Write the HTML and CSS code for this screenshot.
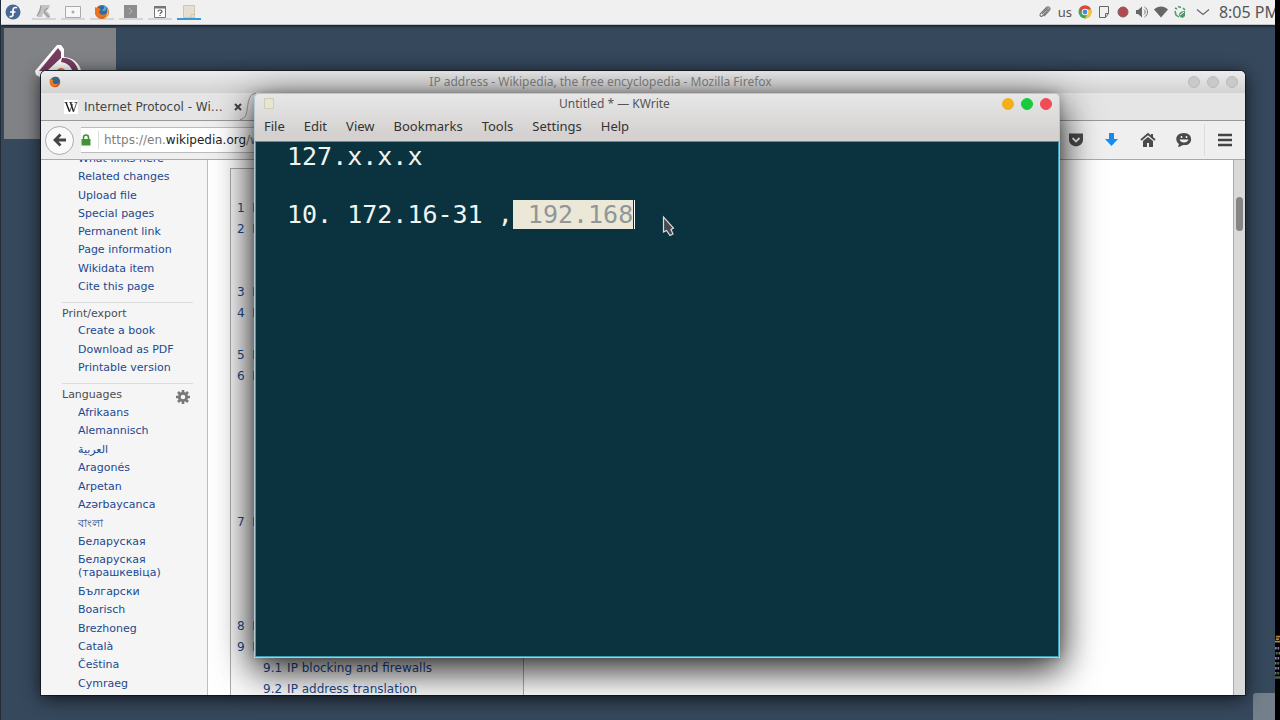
FILE: index.html
```html
<!DOCTYPE html>
<html lang="en">
<head>
<meta charset="utf-8">
<title>Desktop</title>
<link rel="stylesheet" href="styles.css">
</head>
<body>
<div class="screen">
<div class="desktop">
  <header class="panel">
    <nav class="launchers" aria-label="Launchers">
      <button class="launcher plain" aria-label="Applications"><svg width="16" height="16" viewBox="0 0 16 16"><circle cx="8" cy="8" r="7.500" fill="#4a6896"/><path d="M4.500 12.500C7 13 8 12 8 10V6.500C8 4 9.500 3 12 3.700M5 8h5.500" fill="none" stroke="#fff" stroke-width="1.700"/></svg></button>
      <button class="launcher" aria-label="Tools"><svg width="16" height="16" viewBox="0 0 16 16"><path d="M4 1h10l-1 3-3 2 4 5v3h-3l-4-5-1 4H1l2-3-2-1 3-2z" fill="#c3c3c3"/><path d="M5 2c-1 4-1 7-4 10M8 7l4-3M8 8l5 5" fill="none" stroke="#9d9d9d" stroke-width="1.500"/></svg></button>
      <button class="launcher" aria-label="Screen"><svg width="16" height="16" viewBox="0 0 16 16"><path d="M.5 2.500h15v11H.5z" fill="#f7f7f7" stroke="#aaa"/><circle cx="8" cy="8" r="1.500" fill="#aaa"/></svg></button>
      <button class="launcher" aria-label="Firefox"><svg width="16" height="16" viewBox="0 0 16 16"><circle cx="8" cy="8" r="7" fill="#d95d1c"/><circle cx="8.500" cy="6.500" r="5" fill="#2f6ca6"/><path d="M9 1.500c2 1 2 3 0 4s1 2 2 1 2-3 1-4z" fill="#58b9d0"/><path d="M1 3c1 1 2 1 4 1l2 2-2 1c0 4 5 5 8 2-1 5-11 7-12 0z" fill="#e87322"/><path d="M13 4c3 4 1 10-4 11 3-2 5-5 4-11z" fill="#f8bf3a"/></svg></button>
      <button class="launcher" aria-label="Terminal"><svg width="16" height="16" viewBox="0 0 16 16"><path d="M1 1h13v13H1z" fill="#8d8d8d"/><path d="m6 4 3 3.500L6 10" fill="none" stroke="#bbb"/></svg></button>
      <button class="launcher" aria-label="Help window"><svg width="16" height="16" viewBox="0 0 16 16"><path d="M2.500 2.500h11v11h-11z" fill="#fff" stroke="#777"/><path d="M2 2h12v2.500H2z" fill="#6d7780"/><path d="M6 7.500c0-2 4-2 4 0 0 1.300-2 1.200-2 2.500m0 1v1" fill="none" stroke="#555" stroke-width="1.200"/></svg></button>
      <button class="launcher active" aria-label="KWrite"><svg width="16" height="16" viewBox="0 0 16 16"><path d="M2.500 1.500h11v12h-11z" fill="#e6dfcf" stroke="#cdc6b5"/><path d="M10 13.500v-3h3.500" fill="none" stroke="#cdc6b5"/></svg></button>
    </nav>
    <div class="tray">
      <svg width="14" height="14" viewBox="0 0 14 14"><path d="M4 9l5-5c1-1 2 0 1 1L5 10.500c-2 2-4 0-2.500-2L8 3c2.500-2.500 5.500 0 3 3l-5 5" fill="none" stroke="#777" stroke-width="1.100"/></svg>
      <span class="layout">us</span>
      <svg width="14" height="14" viewBox="0 0 14 14"><circle cx="7" cy="7" r="6.500" fill="#3fa757"/><path d="M1.400 3.800A6.500 6.500 0 0 1 13 4.500H7L4 8z" fill="#d94a3e"/><path d="M13 4.500A6.500 6.500 0 0 1 7 13.500L10 8 8 4.500z" fill="#f3c63a"/><circle cx="7" cy="7" r="3.200" fill="#fff"/><circle cx="7" cy="7" r="2.400" fill="#4b87dc"/></svg>
      <svg width="14" height="14" viewBox="0 0 14 14"><path d="M2.500 1.500h9v7l-3 4h-6zM11.500 8.500h-3v4" fill="none" stroke="#666"/></svg>
      <svg width="14" height="14" viewBox="0 0 14 14"><circle cx="7" cy="7" r="5" fill="#b3484e" stroke="#7b6264"/></svg>
      <svg width="14" height="14" viewBox="0 0 14 14"><path d="M1 5h2l4-3.500v11L3 9H1z" fill="#666"/><path d="M9 4.500c1.500 1 1.500 4 0 5M9.500 2c4 2 4 8 0 10" fill="none" stroke="#777"/></svg>
      <svg width="14" height="14" viewBox="0 0 14 14"><path d="M0 4.500c4-4 10-4 14 0l-7 8z" fill="#666"/></svg>
      <svg width="14" height="14" viewBox="0 0 14 14"><path d="M2 3l2 1M5 1.500l3 1M10 3l2 2M2 6l1 4 3 2" fill="none" stroke="#4c9b6b" stroke-width="1.500"/><path d="M6 10c0-3 3-4 6-4v5c-2 3-5 2-6-1z" fill="#4c9b6b"/><path d="m7 10 4-3" stroke="#fff"/></svg>
      <svg class="chevron" width="14" height="14" viewBox="0 0 14 14"><path d="m1 4.500 6 5 6-5" fill="none" stroke="#666" stroke-width="1.200"/></svg>
      <time class="clock">8:05 PM</time>
    </div>
  </header>

  <div class="folder"><svg width="60" height="60" viewBox="0 0 60 60"><path d="M3 27 25 1h4l3 4v8c12 1 18 9 18 21H10l-6-3z" fill="#fff"/><path d="M7 27 26 4l3 4v6L15 27z" fill="#793d60"/><path d="M30 14c10-1 16 7 17 16h-6c-1-7-5-11-12-12z" fill="#793d60"/><circle cx="29" cy="29" r="5" fill="#e77b36"/></svg></div>
  <div class="corner"></div>

  <section class="window firefox">
    <div class="titlebar">
      <svg width="12" height="12" viewBox="0 0 16 16"><circle cx="8" cy="8" r="7" fill="#c94e22"/><circle cx="9" cy="6" r="5" fill="#31668f"/><path d="M1 4c2 0 3 0 5 2l-1 2c1 3 5 4 8 1-2 6-11 7-12 0z" fill="#e87925"/></svg>
      <h1 class="title">IP address - Wikipedia, the free encyclopedia - Mozilla Firefox</h1>
      <div class="controls"><button aria-label="Minimize Firefox"></button><button aria-label="Maximize Firefox"></button><button aria-label="Close Firefox"></button></div>
    </div>
    <div class="tabs">
      <div class="tab">
        <svg width="14" height="14" viewBox="0 0 14 14"><path d="M0 0h14v14H0z" fill="#fff"/><path d="M.5 2.500h3M5.500 2.500h3M10.500 2.500h3M5.500 12 8.500 4M9.500 12 12.500 3" fill="none" stroke="#333" stroke-width=".8"/><path d="m2 2.500 3.500 9M6.500 2.500l3 9" stroke="#222" stroke-width="1.500"/></svg>
        <span>Internet Protocol - Wi…</span>
        <button aria-label="Close tab"><svg width="8" height="8" viewBox="0 0 8 8"><path d="m1 1 6 6M7 1 1 7" stroke="#444" stroke-width="2"/></svg></button>
      </div>
      <svg class="tab-edge" width="16" height="27" viewBox="0 0 16 27"><path d="M0 26.500C12 26 3 1 16 .5" fill="none" stroke="#999"/></svg>
    </div>
    <div class="toolbar">
      <button class="back" aria-label="Back"><svg width="14" height="14" viewBox="0 0 14 14"><path d="M13 7H2M7.500 1.500 2 7l5.500 5.500" fill="none" stroke="#444" stroke-width="2.800"/></svg></button>
      <div class="address">
        <svg width="10" height="12" viewBox="0 0 10 12"><path d="M2.500 6V3.500a2.500 2.500 0 0 1 5 0V6" fill="none" stroke="#419334" stroke-width="1.600"/><path d="M.5 5h9v6.500h-9z" fill="#419334"/></svg>
        <div class="url">https://en.<b>wikipedia.org</b>/w</div>
      </div>
      <button aria-label="Pocket"><svg width="16" height="16" viewBox="0 0 16 16"><path d="M1 1.500h14v6c0 9-14 9-14 0z" fill="#4b4b4b"/><path d="m4.500 6 3.500 3.500L11.500 6" fill="none" stroke="#eee" stroke-width="1.800"/></svg></button>
      <button aria-label="Downloads"><svg width="16" height="16" viewBox="0 0 16 16"><path d="M5 1h5v6h4l-6.500 7L1 7h4z" fill="#168cf0"/></svg></button>
      <button aria-label="Home"><svg width="16" height="16" viewBox="0 0 16 16"><path d="m1 8 7-6 7 6" fill="none" stroke="#4b4b4b" stroke-width="1.800"/><path d="m3 9 5-4 5 4v6H9v-4H7v4H3zM11 2h2v4l-2-2z" fill="#4b4b4b"/></svg></button>
      <button aria-label="Chat"><svg width="16" height="16" viewBox="0 0 16 16"><path d="M8 1c10 0 9 13 0 12-2 0-4 2-6 2l1-3C-2 8 0 1 8 1z" fill="#4b4b4b"/><path d="M5.500 4v2M10.500 4v2" stroke="#eee" stroke-width="1.500"/><path d="M3.500 7.500h9c-1 4-8 4-9 0z" fill="#eee"/></svg></button>
      <button class="menu-button" aria-label="Menu"><svg width="16" height="16" viewBox="0 0 16 16"><path d="M1 3h14M1 8h14M1 13h14" stroke="#444" stroke-width="2.400"/></svg></button>
    </div>
    <div class="page">
      <nav class="sidebar">
        <ul class="links tools">
          <li><a href="#">What links here</a></li><li><a href="#">Related changes</a></li><li><a href="#">Upload file</a></li><li><a href="#">Special pages</a></li><li><a href="#">Permanent link</a></li><li><a href="#">Page information</a></li><li><a href="#">Wikidata item</a></li><li><a href="#">Cite this page</a></li>
        </ul>
        <h2>Print/export</h2>
        <ul class="links export">
          <li><a href="#">Create a book</a></li><li><a href="#">Download as PDF</a></li><li><a href="#">Printable version</a></li>
        </ul>
        <h2>Languages <button aria-label="Language settings"><svg width="14" height="14" viewBox="0 0 14 14"><circle cx="7" cy="7" r="3.700" fill="none" stroke="#777" stroke-width="2.800"/><path d="M7 0v3M7 11v3M0 7h3M11 7h3M2 2l2 2M10 10l2 2M12 2l-2 2M4 10l-2 2" stroke="#777" stroke-width="2.600"/></svg></button></h2>
        <ul class="links languages">
          <li><a href="#">Afrikaans</a></li><li><a href="#">Alemannisch</a></li><li><a href="#" lang="ar">العربية</a></li><li><a href="#">Aragonés</a></li><li><a href="#">Arpetan</a></li><li><a href="#">Azərbaycanca</a></li><li><a href="#" lang="bn">বাংলা</a></li><li><a href="#">Беларуская</a></li><li><a href="#">Беларуская<br>(тарашкевіца)</a></li><li><a href="#">Български</a></li><li><a href="#">Boarisch</a></li><li><a href="#">Brezhoneg</a></li><li><a href="#">Català</a></li><li><a href="#">Čeština</a></li><li><a href="#">Cymraeg</a></li>
        </ul>
      </nav>
      <main class="article">
        <ul class="toc">
          <li class="s1"><a href="#">1 &nbsp;I</a></li><li class="s2"><a href="#">2 &nbsp;I</a></li><li class="s3"><a href="#">3 &nbsp;I</a></li><li class="s4"><a href="#">4 &nbsp;I</a></li><li class="s5"><a href="#">5 &nbsp;I</a></li><li class="s6"><a href="#">6 &nbsp;I</a></li><li class="s7"><a href="#">7 &nbsp;I</a></li><li class="s8"><a href="#">8 &nbsp;I</a></li><li class="s9"><a href="#">9 &nbsp;I</a></li>
          <li class="sub s91"><a href="#"><span>9.1</span>IP blocking and firewalls</a></li><li class="sub s92"><a href="#"><span>9.2</span>IP address translation</a></li>
        </ul>
      </main>
      <div class="scrollbar"><div class="thumb"></div></div>
    </div>
    <div class="shade"></div>
  </section>

  <section class="window kwrite">
    <div class="titlebar">
      <svg width="12" height="12" viewBox="0 0 12 12"><path d="M1.500.5h9v10h-9z" fill="#e9e5cf" stroke="#d0ccb8"/></svg>
      <h1 class="title">Untitled * — KWrite</h1>
      <div class="controls"><button class="yellow" aria-label="Minimize"></button><button class="green" aria-label="Maximize"></button><button class="red" aria-label="Close"></button></div>
    </div>
    <nav class="menubar"><button>File</button><button>Edit</button><button>View</button><button>Bookmarks</button><button>Tools</button><button>Settings</button><button>Help</button></nav>
    <div class="editor" role="textbox" aria-multiline="true" aria-label="Document" tabindex="0"><p>127.x.x.x</p><p><br></p><p>10. 172.16-31 ,<mark> 192.168</mark></p></div>
  </section>

  <svg class="pointer" width="14" height="22" viewBox="0 0 14 22"><path d="M2.500 2v15l3-1.500L9 20.500l3-1.500-2-4.500 2.500-1.500z" fill="#494a50" stroke="#ddd" stroke-width="1.200"/></svg>
</div>
<svg class="edge" width="5" height="60" viewBox="0 0 6 60"><path d="M1 2h5M0 8h6M1 5h4" stroke="#b9823f" stroke-width="2"/><path d="M0 16h6M0 28h6M0 40h6" stroke="#8d76b5" stroke-width="3" stroke-dasharray="2 1"/><path d="M1 22h5M0 34h6M0 46h5" stroke="#78a06c" stroke-width="3" stroke-dasharray="1 1"/><path d="M0 51h6" stroke="#555" stroke-width="3"/></svg>
</div>
</body>
</html>
```

FILE: styles.css
```css
* { box-sizing: border-box; }
body { margin: 0; font-family: "Noto Sans", sans-serif; font-size: 13px; background: #000; }
button { border: 0; padding: 0; background: none; font: inherit; color: inherit; }
ul, h1, h2, p { margin: 0; padding: 0; list-style: none; font-weight: normal; }
svg { display: block; flex: none; }
a { color: #1c4990; text-decoration: none; }

.screen { display: flex; align-items: flex-end; height: 100vh; background: #000; }
.desktop { position: relative; flex: 1; height: 100%; overflow: hidden; background: #36485c; border-left: 1px solid #222c38; }
.edge { margin-bottom: 30px; }

.panel { display: flex; justify-content: space-between; height: 25px; background: #f0f0f0; border-bottom: 1px solid #c4c6c7; box-shadow: 0 1px 3px rgba(0,0,0,.7); }
.launchers { display: flex; gap: 5px; }
.launcher { display: flex; justify-content: center; width: 24px; height: 20px; padding-top: 4px; border-bottom: 2px solid #d5d5d5; }
.launcher.plain { border-color: transparent; margin-right: 2px; }
.launcher.active { border-color: #359bd0; }
.tray { display: flex; align-items: center; gap: 5px; margin-right: -4px; color: #555; }
.layout { font-size: 13px; margin: 0 1px; }
.chevron { margin: 0 4px; }
.clock { font-size: 16px; white-space: nowrap; }

.folder { position: absolute; left: 3px; top: 28px; width: 112px; height: 111px; padding: 16px 28px; background: #808285; }
.corner { position: absolute; right: 0; bottom: 0; width: 22px; height: 27px; background: #73808c; border-radius: 3px 0 0 0; }

.window { position: absolute; display: flex; flex-direction: column; overflow: hidden; border-radius: 5px 5px 0 0; }
.titlebar { display: flex; align-items: center; flex: none; padding: 0 7px 0 8px; }
.title { flex: 1; padding-right: 48px; text-align: center; font-size: 12px; line-height: 22px; }
.controls { display: flex; gap: 7px; }
.controls button { width: 12px; height: 12px; border-radius: 50%; background: #c9c9c9; border: 1px solid #bababa; }
.controls .yellow { background: #f4b01c; border-color: #f4b01c; }
.controls .green { background: #19cb3c; border-color: #19cb3c; }
.controls .red { background: #f14b55; border-color: #f14b55; }

.firefox { left: 40px; right: 30px; top: 71px; bottom: 25px; background: #fff; box-shadow: 0 3px 18px rgba(0,0,0,.75), 0 0 0 1px #1d2732; font-family: "DejaVu Sans", sans-serif; }
.firefox .titlebar { height: 22px; background: linear-gradient(#ececec, #d2d2d2); color: #858585; font-family: "Noto Sans", sans-serif; }
.tabs { display: flex; flex: none; height: 28px; background: #e5e5e5; border-bottom: 1px solid #999; }
.tab { display: flex; align-items: center; gap: 6px; padding-left: 23px; font-size: 12px; color: #444; }
.tab button { margin: 0 0 0 5px; }
.tab-edge { margin-left: -2px; }
.toolbar { display: flex; align-items: center; flex: none; gap: 20px; height: 39px; padding: 0 12px 0 4px; background: #efefef; border-bottom: 1px solid #aaa; }
.back { display: grid; place-items: center; width: 29px; height: 29px; border: 1px solid #aaa; border-radius: 50%; background: #fafafa; }
.address { display: flex; align-items: center; flex: 1; gap: 7px; height: 26px; margin-left: -13px; border-top: 1px solid #bbb; border-bottom: 1px solid #bbb; background: #fff; font-size: 12px; color: #808080; }
.url { padding-left: 5px; border-left: 1px solid #ddd; line-height: 18px; }
.url b { color: #222; font-weight: normal; }
.menu-button { padding: 8px 0 8px 12px; margin-left: -8px; border-left: 1px solid #ddd; }

.page { display: flex; flex: 1; min-height: 0; overflow: hidden; font-size: 12px; line-height: 13px; }
.sidebar { width: 167px; flex: none; padding: 0 14px 0 21px; background: #f5f5f5; border-right: 1px solid #a7c5d5; font-size: 11px; }
.sidebar h2 { display: flex; justify-content: space-between; margin-top: 9px; padding: 4px 3px 0 0; height: 22px; border-top: 1px solid #dcdcdc; font-size: 11px; color: #4d4d4d; }
.links { display: flex; flex-direction: column; justify-content: space-between; padding-left: 16px; }
.links li { height: 13px; white-space: nowrap; }
.links li:has(br) { height: 26px; }
.tools { height: 141px; margin-top: -8px; }
.export { height: 50px; }
.languages { height: 284px; margin-top: 1px; }
.article { flex: 1; padding: 8px 0 0 22px; overflow: hidden; }
.toc { display: grid; grid-template-rows: repeat(24, 1fr); width: 294px; height: 536px; padding: 29px 6px 3px; border: 1px solid #aaa; background: #f9f9f9; }
.toc li { line-height: 21px; white-space: nowrap; }
.toc .sub { padding-left: 26px; }
.toc .sub span { margin-right: 5px; }
.s1 { grid-row: 1; } .s2 { grid-row: 2; } .s3 { grid-row: 5; } .s4 { grid-row: 6; } .s5 { grid-row: 8; } .s6 { grid-row: 9; }
.s7 { grid-row: 16; } .s8 { grid-row: 21; } .s9 { grid-row: 22; } .s91 { grid-row: 23; } .s92 { grid-row: 24; }
.scrollbar { width: 12px; padding: 37px 2px 0; background: #d9d9d9; border-left: 1px solid #aaa; }
.thumb { height: 34px; border-radius: 4px; background: #858585; }
.shade { position: absolute; left: 213px; right: 185px; top: 36px; bottom: 37px; box-shadow: 0 12px 30px rgba(0,0,0,.4); pointer-events: none; }

.kwrite { left: 253px; right: 215px; top: 93px; bottom: 62px; background: linear-gradient(#e7e7e7, #d5d1d1 40px, #d5d1d1); border: 1px solid #b4c9d1; box-shadow: 0 8px 40px rgba(0,0,0,.7), 0 0 8px rgba(0,0,0,.2); }
.kwrite .titlebar { height: 20px; color: #555; }
.menubar { display: flex; gap: 20px; height: 27px; padding: 0 0 4px 9px; font-size: 13px; color: #333; }
.menubar button { margin-right: -1px; }
.editor { flex: 1; padding: 0 31px; border: 1px solid #3e9db3; background: #0a333f; color: #f0f4f3; font-family: "DejaVu Sans Mono", monospace; font-size: 25px; line-height: 29px; white-space: pre; overflow: hidden; }
.editor mark { display: inline-block; background: #ece8d7; color: #919797; border-right: 1px solid #0a333f; box-shadow: 1px 0 #fff; }

.pointer { position: absolute; left: 660px; top: 215px; }
```
